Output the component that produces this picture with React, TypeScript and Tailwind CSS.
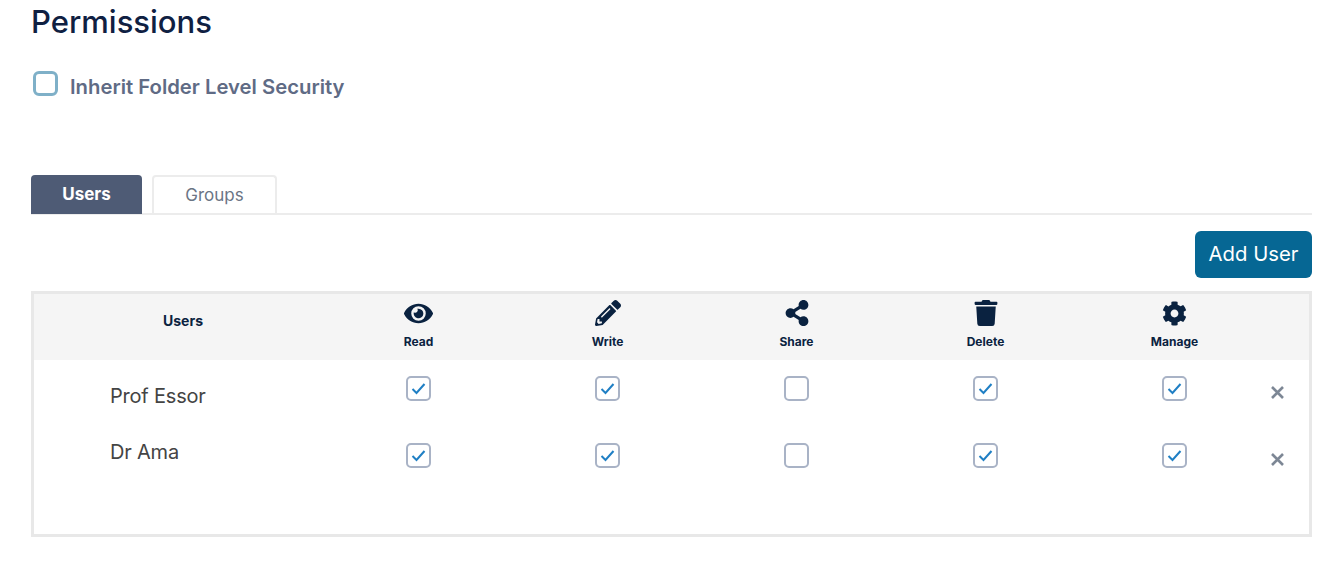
import React from 'react';
import { FaEye, FaPencilAlt, FaShareAlt, FaTrash, FaCog } from 'react-icons/fa';

const columns = [
  { label: 'Read', icon: <FaEye className="text-[29px]" /> },
  { label: 'Write', icon: <FaPencilAlt className="text-[26px]" /> },
  { label: 'Share', icon: <FaShareAlt className="text-[26px]" /> },
  { label: 'Delete', icon: <FaTrash className="text-[26px]" /> },
  { label: 'Manage', icon: <FaCog className="text-[25px]" /> },
];

const users = [
  { name: 'Prof Essor', nameClass: 'pt-[7px]', perms: [true, true, false, true, true] },
  { name: 'Dr Ama', nameClass: '-mt-[4px]', perms: [true, true, false, true, true] },
];

const CheckBox = ({ checked }: { checked: boolean }) => (
  <div className="w-[25px] h-[25px] rounded-[5px] border-2 border-[#a9b3c6] bg-white flex items-center justify-center">
    {checked && (
      <svg width="15" height="13" viewBox="0 0 15 13" fill="none">
        <path d="M1.5 7 L5.5 11 L13.5 2" stroke="#1f7fc4" strokeWidth="2" />
      </svg>
    )}
  </div>
);

export default function App() {
  return (
    <div className="w-[1334px] h-[587px] bg-white overflow-hidden pl-[31px] pr-[22px] font-['Inter',sans-serif]">
      <h1 className="text-[31px] leading-[34px] pt-[5px] font-medium text-[#0f2042]">Permissions</h1>

      <div className="flex items-start mt-[32px] ml-[2px] h-[28px]">
        <div className="w-[25px] h-[25px] rounded-[6px] border-[3px] border-[#7fb0c8] bg-white" />
        <span className="ml-[12px] mt-[3px] text-[20.3px] leading-[26px] font-semibold text-[#5f6b85]">Inherit Folder Level Security</span>
      </div>

      {/* Tabs */}
      <div className="flex items-end mt-[75px] border-b-2 border-[#ececec] h-[41px]">
        <div className="w-[111px] h-[39px] -mb-[1px] rounded-t-[4px] bg-[#4e5b75] text-white text-[17px] font-bold flex items-center justify-center">
          Users
        </div>
        <div className="w-[125px] h-[39px] -mb-[1px] ml-[10px] rounded-t-[4px] border-2 border-b-0 border-[#ececec] text-[#6b7585] text-[17px] flex items-center justify-center">
          Groups
        </div>
      </div>

      <div className="flex justify-end mt-[16px]">
        <button className="w-[117px] h-[47px] rounded-[6px] bg-[#066794] text-white text-[20.3px]">Add User</button>
      </div>

      {/* Table */}
      <div className="mt-[13px] h-[246px] border-[3px] border-[#e8e8e8]">
        <div className="grid grid-cols-[290px_repeat(5,189px)_1fr] h-[66px] bg-[#f5f5f5] text-[#0a2240]">
          <div className="pl-[8px] flex items-center justify-center text-[14px] font-bold pb-[14px]">Users</div>
          {columns.map(c => (
            <div key={c.label} className="flex flex-col items-center pt-[6px]">
              <div className="h-[26px] flex items-center">{c.icon}</div>
              <span className="mt-[8px] text-[12px] leading-[16px] font-bold">{c.label}</span>
            </div>
          ))}
        </div>
        <div className="pt-[16px]">
          {users.map(u => (
            <div key={u.name} className="grid grid-cols-[290px_repeat(5,189px)_1fr] h-[67px]">
              <div className={`pl-[76px] text-[20px] leading-[26px] tracking-[-0.2px] text-[#444] ${u.nameClass}`}>{u.name}</div>
              {u.perms.map((p, i) => (
                <div key={i} className="flex justify-center">
                  <CheckBox checked={p} />
                </div>
              ))}
              <div className="pt-[9px] pl-[1px]">
                <svg width="15" height="15" viewBox="0 0 15 15" fill="none">
                  <path d="M2 2 L13 13 M13 2 L2 13" stroke="#7d8795" strokeWidth="2.6" />
                </svg>
              </div>
            </div>
          ))}
        </div>
      </div>
    </div>
  );
}
